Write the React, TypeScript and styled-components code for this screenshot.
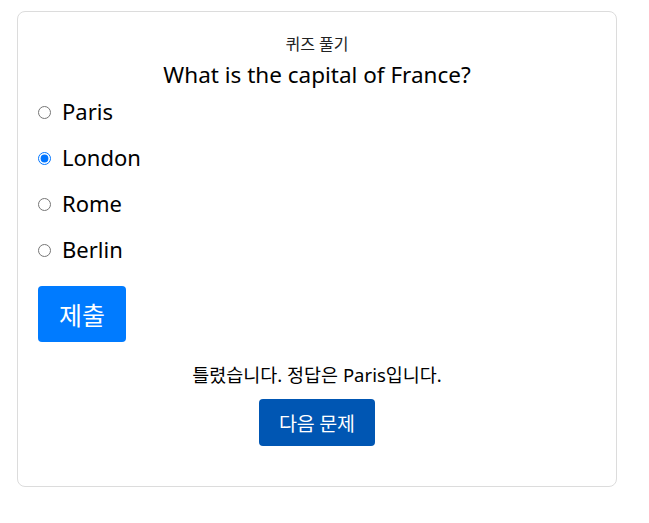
import React, { useState } from "react";
import styled, { createGlobalStyle } from "styled-components";

const GlobalStyle = createGlobalStyle`
  html, body { margin: 0; padding: 0; background: #ffffff; }
  body {
    font-family: "Noto Sans", "Noto Sans CJK KR", sans-serif;
    color: #212529;
  }
`;

const Page = styled.div`
  padding: 11px 0 0 17px;
`;

const Card = styled.div`
  width: 600px;
  height: 476px;
  box-sizing: border-box;
  border: 1px solid #dcdcdc;
  border-radius: 8px;
  padding: 20px 20px;
  display: flex;
  flex-direction: column;
`;

const Title = styled.div`
  font-size: 16px;
  line-height: 24px;
  text-align: center;
  color: #222;
`;

const Question = styled.div`
  margin-top: 2px;
  font-size: 22.5px;
  line-height: 34px;
  text-align: center;
  color: #000;
`;

const Options = styled.div`
  margin-top: 3px;
  display: flex;
  flex-direction: column;
  gap: 13px;
`;

const Option = styled.label`
  display: flex;
  align-items: center;
  font-size: 22px;
  line-height: 33px;
  color: #000;
  cursor: pointer;
`;

const Radio = styled.input`
  width: 13px;
  height: 13px;
  margin: 2px 11px 0 0;
  accent-color: #0075ff;
`;

const SubmitButton = styled.button`
  align-self: flex-start;
  margin-top: 20px;
  width: 88px;
  height: 56px;
  padding: 0;
  border: none;
  border-radius: 4px;
  background: #007bff;
  color: #fff;
  font-family: "Noto Sans CJK KR", sans-serif;
  font-size: 25px;
`;

const Feedback = styled.div`
  margin-top: 19px;
  text-align: center;
  font-size: 18.5px;
  line-height: 28px;
  color: #000;
`;

const NextButton = styled.button`
  align-self: center;
  margin-top: 10px;
  width: 116px;
  height: 47px;
  padding: 0;
  border: none;
  border-radius: 4px;
  background: #0056b3;
  color: #fff;
  font-family: "Noto Sans CJK KR", sans-serif;
  font-size: 19.5px;
`;

const options = ["Paris", "London", "Rome", "Berlin"];

export default function App() {
  const [selected, setSelected] = useState("London");
  return (
    <>
      <GlobalStyle />
      <Page>
        <Card>
          <Title>퀴즈 풀기</Title>
          <Question>What is the capital of France?</Question>
          <Options>
            {options.map((o) => (
              <Option key={o}>
                <Radio
                  type="radio"
                  name="quiz"
                  checked={selected === o}
                  onChange={() => setSelected(o)}
                />
                {o}
              </Option>
            ))}
          </Options>
          <SubmitButton>제출</SubmitButton>
          <Feedback>틀렸습니다. 정답은 Paris입니다.</Feedback>
          <NextButton>다음 문제</NextButton>
        </Card>
      </Page>
    </>
  );
}
